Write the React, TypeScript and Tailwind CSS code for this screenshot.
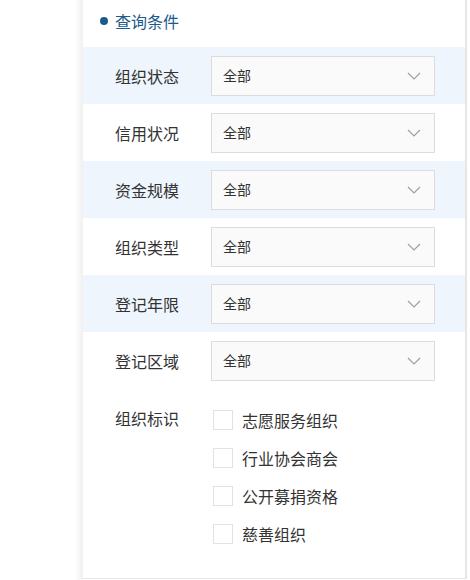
const fields = ["组织状态", "信用状况", "资金规模", "组织类型", "登记年限", "登记区域"];
const tags = ["志愿服务组织", "行业协会商会", "公开募捐资格", "慈善组织"];

function Chevron() {
  return (
    <svg width="14" height="8" viewBox="0 0 14 8" fill="none" className="text-[#9aa0a6]">
      <path d="M1 1l6 6 6-6" stroke="currentColor" strokeWidth="1.2" />
    </svg>
  );
}

export default function App() {
  return (
    <div
      className="flex h-[580px] w-[470px] bg-white"
      style={{ fontFamily: '"Noto Sans CJK SC", "Noto Sans", sans-serif' }}
    >
      <div className="w-[75px] shrink-0" />
      <div className="w-[8px] shrink-0 bg-gradient-to-r from-white to-[#f0f0f0]" />
      <div className="flex h-[579px] w-[384px] shrink-0 flex-col border-r-[2px] border-b border-[#e6e6e6] bg-white">
        <div className="flex h-[47px] items-center gap-[7px] pl-[17px] pb-[6px]">
          <span className="h-[8px] w-[8px] rounded-full bg-[#1d5a8c]" />
          <span className="text-[16px] text-[#1d5a8c]">查询条件</span>
        </div>
        {fields.map((f, i) => (
          <div
            key={f}
            className={`flex h-[57px] items-center ${i % 2 === 0 ? "bg-[#eef5fc]" : "bg-white"}`}
          >
            <span className="w-[128px] pl-[32px] text-[16px] text-[#333]">{f}</span>
            <div className="flex h-[40px] w-[224px] items-center justify-between border border-[#dcdcdc] bg-[#fafafa] pl-[11px] pr-[13px]">
              <span className="text-[14px] text-[#333]">全部</span>
              <Chevron />
            </div>
          </div>
        ))}
        <div className="flex pt-[18px]">
          <span className="w-[128px] pl-[32px] text-[16px] leading-[22px] text-[#333]">组织标识</span>
          <div className="flex flex-col gap-[18px] pl-[2px] pt-[3px]">
            {tags.map((t) => (
              <label key={t} className="flex items-center gap-[9px]">
                <span className="h-[20px] w-[20px] border border-[#e2e2e2] bg-white" />
                <span className="text-[16px] leading-[20px] text-[#333]">{t}</span>
              </label>
            ))}
          </div>
        </div>
      </div>
    </div>
  );
}
